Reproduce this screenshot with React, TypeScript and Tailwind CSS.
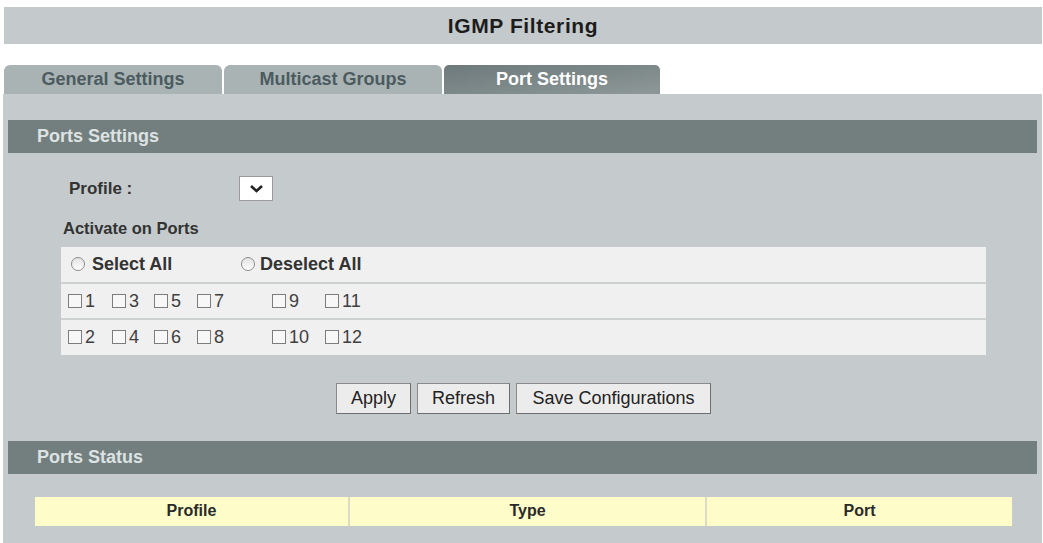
import React from 'react';

const tabs = [
  { label: 'General Settings', active: false },
  { label: 'Multicast Groups', active: false },
  { label: 'Port Settings', active: true },
];

// column widths so the boxes line up like the original table cells
const portCols = [44, 42, 43, 75, 53, 60];
const oddPorts = ['1', '3', '5', '7', '9', '11'];
const evenPorts = ['2', '4', '6', '8', '10', '12'];

function Radio() {
  return (
    <span className="inline-block w-[14px] h-[14px] rounded-full border border-[#8c8c8c] bg-gradient-to-b from-[#e2e2e2] to-white shrink-0" />
  );
}

function Box() {
  return <span className="inline-block w-[14px] h-[14px] border border-[#7d7d7d] bg-[#f7f7f7] shrink-0" />;
}

function PortRow({ ports, h }: { ports: string[]; h: string }) {
  return (
    <div className={`flex items-center ${h} pl-[7px] border-t-2 border-[#cdd1d1]`}>
      {ports.map((p, i) => (
        <div key={p} className="flex items-center gap-[3px]" style={{ width: portCols[i] }}>
          <Box />
          <span className="text-[18px] leading-none text-[#3f3f3f]">{p}</span>
        </div>
      ))}
    </div>
  );
}

function SectionHeader({ title }: { title: string }) {
  return (
    <div className="mx-[5px] h-[33px] bg-[#737f7f] flex items-center pl-[29px]">
      <span className="text-[18px] font-bold text-[#dde2e2]">{title}</span>
    </div>
  );
}

function Btn({ label, w }: { label: string; w: string }) {
  return (
    <button
      className={`h-[31px] ${w} bg-[#ececec] border border-[#8a8a8a] border-r-[#6e6e6e] border-b-[#6e6e6e] text-[18px] text-[#222] leading-none`}
    >
      {label}
    </button>
  );
}

export default function App() {
  return (
    <div className="w-[1043px] h-[543px] bg-white overflow-hidden font-['Liberation_Sans',Arial,sans-serif] pl-[4px] pr-[1px] pt-[7px]">
      {/* Title bar */}
      <div className="h-[37px] bg-[#c4cacb] flex items-center justify-center">
        <h1 className="text-[21px] font-bold text-[#1c1c1c] tracking-[0.6px]">IGMP Filtering</h1>
      </div>

      {/* Tabs */}
      <div className="mt-[21px] flex gap-[2px] h-[29px]">
        {tabs.map((t) => (
          <div
            key={t.label}
            className={
              t.active
                ? 'w-[216px] rounded-t-[5px] bg-gradient-to-br from-[#6d7a7b] via-[#7d8889] to-[#8e9899] flex items-center justify-center text-[18px] font-bold text-white'
                : 'w-[218px] rounded-t-[6px] bg-[#a9b3b4] flex items-center justify-center text-[18px] font-bold text-[#4b5b60]'
            }
          >
            {t.label}
          </div>
        ))}
      </div>

      {/* Main panel */}
      <div className="-ml-[1px] h-[460px] bg-[#c5cbcc] pt-[26px]">
        <SectionHeader title="Ports Settings" />

        <div className="mt-[23px] flex items-center h-[25px]">
          <span className="ml-[66px] w-[170px] text-[17px] font-bold text-[#333]">Profile :</span>
          <div className="w-[34px] h-[25px] bg-white border border-[#9a9a9a] flex items-center justify-center">
            <svg width="15" height="9" viewBox="0 0 15 9" fill="none" stroke="#222" strokeWidth="2.6">
              <polyline points="2 2 7.5 7 13 2" />
            </svg>
          </div>
        </div>

        <div className="mt-[19px] ml-[60px] text-[16.5px] font-bold text-[#333] leading-none">Activate on Ports</div>

        <div className="mt-[10px] ml-[58px] w-[925px] bg-[#f0f0f0]">
          <div className="flex items-center h-[35px] pl-[10px]">
            <div className="flex items-center gap-[7px] w-[170px]">
              <Radio />
              <span className="text-[18px] font-bold text-[#333]">Select All</span>
            </div>
            <div className="flex items-center gap-[5px]">
              <Radio />
              <span className="text-[18px] font-bold text-[#333]">Deselect All</span>
            </div>
          </div>
          <PortRow ports={oddPorts} h="h-[36px]" />
          <PortRow ports={evenPorts} h="h-[37px]" />
        </div>

        <div className="mt-[28px] flex justify-center gap-[6px] pl-[2px]">
          <Btn label="Apply" w="w-[75px]" />
          <Btn label="Refresh" w="w-[93px]" />
          <Btn label="Save Configurations" w="w-[195px]" />
        </div>

        <div className="mt-[27px]">
          <SectionHeader title="Ports Status" />
        </div>

        <div className="mt-[23px] ml-[32px] w-[977px] h-[29px] bg-[#fefdc9] flex text-[16px] font-bold text-[#2a2a2a]">
          <div className="w-[313px] flex items-center justify-center">Profile</div>
          <div className="w-[357px] flex items-center justify-center border-l-2 border-[#dcdcc6]">Type</div>
          <div className="flex-1 flex items-center justify-center border-l-2 border-[#dcdcc6]">Port</div>
        </div>
      </div>
    </div>
  );
}
